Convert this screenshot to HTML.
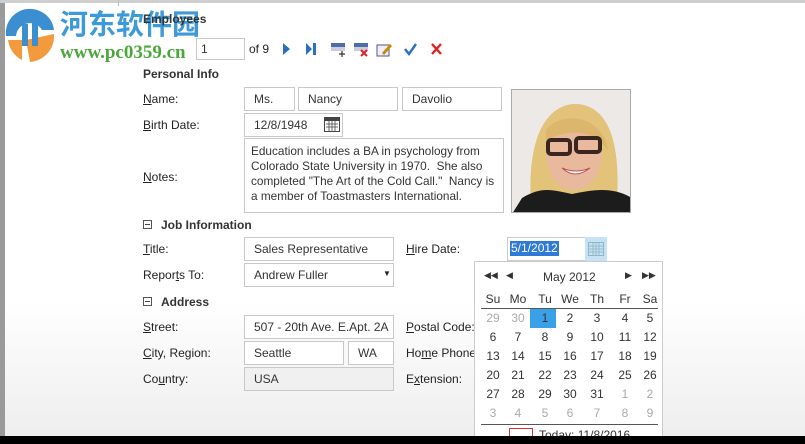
<!DOCTYPE html>
<html><head><meta charset="utf-8"><style>
body{margin:0;width:805px;height:444px;overflow:hidden;position:relative;font-family:"Liberation Sans","DejaVu Sans",sans-serif;font-size:12px;color:#222;
background:linear-gradient(#fff 0,#fff 300px,#eeeeee 436px);}
.a{position:absolute;white-space:nowrap}
.b{position:absolute;border:1px solid #c8c8c8;background:#fff;box-sizing:border-box;padding:0 0 0 9px;line-height:21px;color:#333}
.h{font-weight:bold;color:#333}
u{text-decoration:underline}
.mb{position:absolute;width:9px;height:9px;border:1px solid #555;box-sizing:border-box}
.mb:after{content:"";position:absolute;left:1px;top:3px;width:5px;height:1px;background:#444}
.c{position:absolute;width:26px;text-align:center;color:#333;font-size:12px}
.g{color:#aaa}
</style></head><body>
<div style="position:absolute;left:0;top:0;width:5px;height:436px;background:#9a9a9a"></div>
<div style="position:absolute;left:0;top:0;width:805px;height:3px;background:#cfcfcf"></div>
<div style="position:absolute;left:118px;top:0;width:1px;height:6px;background:#bbb"></div>
<!-- logo -->
<svg class="a" style="left:2px;top:6px" width="56" height="56" viewBox="0 0 56 56">
<path d="M4 30 A24 24 0 0 1 52 24 L40 24 A14 14 0 0 0 14 30 Z" fill="#3b8fd0"/>
<path d="M6 34 L20 34 L20 54 A26 26 0 0 1 6 34Z M24 34 L52 28 A26 26 0 0 1 28 56 Z" fill="#f39a3c"/>
<rect x="20" y="18" width="6" height="22" fill="#3b8fd0"/><rect x="30" y="14" width="6" height="26" fill="#3b8fd0"/>
</svg>
<div class="a" style="left:60px;top:5px;font-size:28px;font-weight:bold;color:#3d9ad8;font-family:'Noto Sans CJK SC',sans-serif;line-height:36px">河东软件园</div>
<div class="a" style="left:60px;top:42px;font-size:19px;font-weight:bold;color:#4aa83a;font-family:'Liberation Serif',serif">www.pc0359.cn</div>
<div class="a h" style="left:143px;top:12px">Employees</div>
<div class="b" style="left:196px;top:38px;width:49px;height:22px;padding-left:4px">1</div>
<div class="a" style="left:249px;top:42px">of 9</div>
<svg class="a" style="left:280px;top:40px" width="170" height="18" viewBox="0 0 170 18">
<path d="M3 3 L10 9 L3 15Z" fill="#2f6fc0"/>
<path d="M26 3 L32 9 L26 15Z M33 3h3v12h-3z" fill="#2f6fc0"/>
<rect x="51" y="3" width="14" height="8" fill="#4a6fa8"/><rect x="51" y="7" width="14" height="4" fill="#ccd"/><path d="M62 11v6M59 14h6" stroke="#333" stroke-width="1.2"/>
<rect x="74" y="3" width="14" height="8" fill="#4a6fa8"/><rect x="74" y="7" width="14" height="4" fill="#ccd"/><path d="M81 10l6 6M87 10l-6 6" stroke="#d22" stroke-width="2"/>
<rect x="97" y="5" width="12" height="11" fill="#eef" stroke="#557"/><path d="M102 13l8-9 2 2-8 9z" fill="#c80"/>
<path d="M125 9l4 5 7-10" stroke="#2f6fc0" stroke-width="2.4" fill="none"/>
<path d="M152 4l9 10M161 4l-9 10" stroke="#d22" stroke-width="2.4"/>
</svg>
<div class="a h" style="left:143px;top:67px">Personal Info</div>
<div class="a" style="left:143px;top:92px"><u>N</u>ame:</div>
<div class="b" style="left:244px;top:87px;width:51px;height:24px;line-height:22px">Ms.</div>
<div class="b" style="left:298px;top:87px;width:100px;height:24px;line-height:22px">Nancy</div>
<div class="b" style="left:402px;top:87px;width:100px;height:24px;line-height:22px">Davolio</div>
<div class="a" style="left:143px;top:118px"><u>B</u>irth Date:</div>
<div class="b" style="left:244px;top:113px;width:99px;height:24px;line-height:22px">12/8/1948</div>
<svg class="a" style="left:324px;top:117px" width="16" height="15"><rect x="0.5" y="0.5" width="15" height="14" fill="#fff" stroke="#444"/><rect x="1" y="1" width="14" height="3" fill="#444"/><path d="M2 7h12M2 10h12M5 4v10M8 4v10M11 4v10" stroke="#666"/></svg>
<div class="a" style="left:143px;top:170px"><u>N</u>otes:</div>
<div class="b" style="left:244px;top:138px;width:260px;height:75px;line-height:15px;padding-top:5px;padding-left:6px;white-space:normal;font-size:11.8px">Education includes a BA in psychology from Colorado State University in 1970.&nbsp; She also completed "The Art of the Cold Call."&nbsp; Nancy is a member of Toastmasters International.</div>
<div class="a" style="left:511px;top:89px;width:120px;height:124px;border:1px solid #aaa;box-sizing:border-box;background:#ece9e6;overflow:hidden">
<svg width="120" height="124" viewBox="0 0 120 124">
<path d="M20 124 C15 80 20 20 60 14 C100 12 110 60 104 124Z" fill="#e3c27a"/>
<ellipse cx="62" cy="64" rx="28" ry="36" fill="#e9b99d"/>
<path d="M34 40 C50 20 90 25 96 60 C80 40 60 38 34 50Z" fill="#dcb66c"/>
<rect x="36" y="50" width="22" height="14" rx="3" fill="none" stroke="#3a2520" stroke-width="4"/><rect x="64" y="48" width="24" height="14" rx="3" fill="none" stroke="#3a2520" stroke-width="4"/>
<path d="M50 78 Q63 90 78 78 Q64 84 50 78Z" fill="#fff" stroke="#b55" />
<path d="M0 124 L10 108 C30 96 40 100 60 104 C80 100 100 96 120 108 L120 124Z" fill="#1c1c1c"/>
</svg></div>
<div class="mb" style="left:143px;top:220px"></div>
<div class="a h" style="left:161px;top:218px">Job Information</div>
<div class="a" style="left:143px;top:242px"><u>T</u>itle:</div>
<div class="b" style="left:244px;top:237px;width:150px;height:24px;line-height:22px">Sales Representative</div>
<div class="a" style="left:406px;top:242px"><u>H</u>ire Date:</div>
<div class="a" style="left:507px;top:237px;width:99px;height:24px;border:1px solid #ccc;box-sizing:border-box;background:#fff"></div>
<div class="a" style="left:510px;top:241px;background:#2f7ad6;color:#fff;padding:0 1px;line-height:15px">5/1/2012</div>
<div class="a" style="left:585px;top:237px;width:22px;height:24px;background:#c7e2f6"></div>
<svg class="a" style="left:588px;top:242px" width="16" height="14"><rect x="0.5" y="0.5" width="15" height="13" fill="none" stroke="#8bb"/><path d="M1 4h14M1 7h14M1 10h14M5 1v13M8 1v13M11 1v13" stroke="#9bc"/></svg>
<div class="a" style="left:143px;top:268px">Repor<u>t</u>s To:</div>
<div class="b" style="left:244px;top:263px;width:150px;height:24px;line-height:22px">Andrew Fuller</div>
<div class="a" style="left:383px;top:269px;font-size:8px">▼</div>
<div class="mb" style="left:143px;top:297px"></div>
<div class="a h" style="left:161px;top:295px">Address</div>
<div class="a" style="left:143px;top:320px"><u>S</u>treet:</div>
<div class="b" style="left:244px;top:315px;width:150px;height:24px;line-height:22px">507 - 20th Ave. E.Apt. 2A</div>
<div class="a" style="left:406px;top:320px"><u>P</u>ostal Code:</div>
<div class="a" style="left:143px;top:346px"><u>C</u>ity, Region:</div>
<div class="b" style="left:244px;top:341px;width:100px;height:24px;line-height:22px">Seattle</div>
<div class="b" style="left:348px;top:341px;width:46px;height:24px;line-height:22px">WA</div>
<div class="a" style="left:406px;top:346px">Ho<u>m</u>e Phone</div>
<div class="a" style="left:143px;top:372px">Co<u>u</u>ntry:</div>
<div class="b" style="left:244px;top:367px;width:150px;height:24px;line-height:22px;background:#f0f0f0">USA</div>
<div class="a" style="left:406px;top:372px">E<u>x</u>tension:</div>
<!-- calendar -->
<div class="a" style="left:474px;top:261px;width:189px;height:180px;border:1px solid #ccc;box-sizing:border-box;background:#fff">
<div class="a" style="left:9px;top:8px;font-size:9px;color:#333">◀◀</div>
<div class="a" style="left:31px;top:8px;font-size:9px;color:#333">◀</div>
<div class="a" style="left:68px;top:8px;color:#333">May 2012</div>
<div class="a" style="left:150px;top:8px;font-size:9px;color:#333">▶</div>
<div class="a" style="left:167px;top:8px;font-size:9px;color:#333">▶▶</div>
<div class="a" style="left:6px;top:46px;width:177px;height:1px;background:#555"></div>
<div class="a" style="left:6px;top:162px;width:177px;height:1px;background:#555"></div>
<div class="a" style="left:55px;top:47px;width:26px;height:19px;background:#3aa0e8"></div>
<div class="a" style="left:34px;top:166px;width:24px;height:14px;border:1px solid #d33;box-sizing:border-box"></div>
<div class="a" style="left:64px;top:166px;color:#333">Today: 11/8/2016</div>
</div>
<div id="cal"></div>
<div style="position:absolute;left:0;top:436px;width:805px;height:8px;background:#000"></div>
<script>
var xs=[493,518,545,570,597,625,650],out="";
var names=["Su","Mo","Tu","We","Th","Fr","Sa"];
for(var i=0;i<7;i++)out+='<div class="c" style="left:'+(xs[i]-13)+'px;top:292px">'+names[i]+'</div>';
var d=[29,30];for(var k=1;k<=31;k++)d.push(k);for(k=1;k<=9;k++)d.push(k);
for(var r=0;r<6;r++)for(i=0;i<7;i++){var idx=r*7+i,v=d[idx],g=(idx<2||idx>32);
out+='<div class="c'+(g?' g':'')+'" style="left:'+(xs[i]-13)+'px;top:'+(311+r*19)+'px">'+v+'</div>';}
document.getElementById('cal').innerHTML=out;
</script>
</body></html>
